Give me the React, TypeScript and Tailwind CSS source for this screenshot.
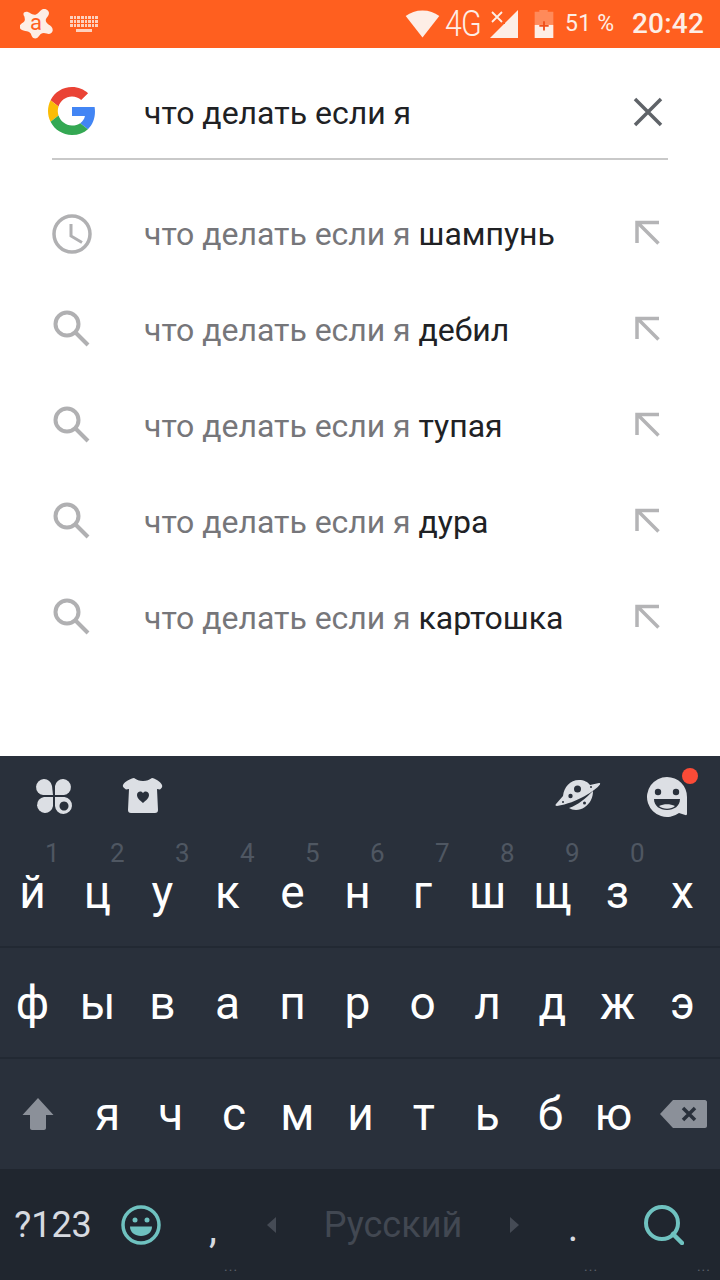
const rows = [
  { bold: "шампунь", clock: true },
  { bold: "дебил" },
  { bold: "тупая" },
  { bold: "дура" },
  { bold: "картошка" },
];
const r1 = ["й", "ц", "у", "к", "е", "н", "г", "ш", "щ", "з", "х"];
const d1 = ["1", "2", "3", "4", "5", "6", "7", "8", "9", "0", ""];
const r2 = ["ф", "ы", "в", "а", "п", "р", "о", "л", "д", "ж", "э"];
const r3 = ["я", "ч", "с", "м", "и", "т", "ь", "б", "ю"];

function GoogleG() {
  return (
    <svg width="48" height="48" viewBox="0 0 48 48">
      <path fill="#EA4335" d="M24 9.5c3.54 0 6.71 1.22 9.21 3.6l6.85-6.85C35.9 2.38 30.47 0 24 0 14.62 0 6.51 5.38 2.56 13.22l7.98 6.19C12.43 13.72 17.74 9.5 24 9.5z" />
      <path fill="#4285F4" d="M46.98 24.55c0-1.57-.15-3.09-.38-4.55H24v9.02h12.94c-.58 2.96-2.26 5.48-4.78 7.18l7.73 6c4.51-4.18 7.09-10.36 7.09-17.65z" />
      <path fill="#FBBC05" d="M10.53 28.59c-.48-1.45-.76-2.99-.76-4.59s.27-3.14.76-4.59l-7.98-6.19C.92 16.46 0 20.12 0 24c0 3.88.92 7.54 2.56 10.78l7.97-6.19z" />
      <path fill="#34A853" d="M24 48c6.48 0 11.93-2.13 15.89-5.81l-7.73-6c-2.15 1.45-4.92 2.3-8.16 2.3-6.26 0-11.57-4.22-13.47-9.91l-7.98 6.19C6.51 42.62 14.62 48 24 48z" />
    </svg>
  );
}

function Avast() {
  return (
    <div className="relative w-[34px] h-[34px]">
      <svg width="34" height="34" viewBox="0 0 34 34">
        <path fill="#fdeee6" d="M4 5.5c2-1.500 4.500-.5 6 .5 2 1.500 4 2 6 1.500 2.500-1 3.500-3.500 6-5 3-1.500 7 .5 7 3.500 0 2.500-2 4-3 6-.8 2.200.5 4 2.500 5.500 2.500 1.500 4.500 3 4.200 6-.4 3-3.500 4-6 3-2.500-.8-4-.8-6 .5-2 1.600-2.500 4.500-5.500 4.500-3 0-3.500-3-4.500-5-1-1.800-3-2.200-5.500-2.500-3-.5-5.700-1.500-5.500-4.500.2-2.500 3-3.500 4.500-5 1.200-1.500.5-3.500 0-5.500C3.500 8.500 3 6.500 4 5.500z" />
      </svg>
      <span className="absolute left-[10px] top-[2px] text-[22px] leading-[28px] font-normal text-[#ff5f1f] font-['Roboto',sans-serif]">a</span>
    </div>
  );
}

function KeyboardIcon() {
  const cells = Array.from({ length: 24 });
  return (
    <div className="flex flex-col items-center gap-[2px] w-[28px] opacity-80">
      <div className="grid grid-cols-8 gap-[1px] w-[28px]">
        {cells.map((_, i) => (
          <div key={i} className="h-[3px] bg-[#fdeee6]" />
        ))}
      </div>
      <div className="w-[16px] h-[3px] bg-[#fdeee6]" />
    </div>
  );
}

function StatusBar() {
  return (
    <div className="h-[48px] bg-[#ff5f1f] flex items-center font-['Roboto',sans-serif] text-[#fdeee6]">
      <div className="ml-[20px]"><Avast /></div>
      <div className="ml-[16px]"><KeyboardIcon /></div>
      <svg className="ml-[307px]" width="35" height="28" viewBox="0 0 36 30">
        <path fill="#fdeee6" d="M0 6.500C5 2.500 11 .5 18 .5s13 2 18 6L18 29.500z" />
      </svg>
      <span className="ml-[5px] w-[45px] text-[37px] leading-[48px] font-light tracking-[-1px] scale-x-[0.82] origin-left whitespace-nowrap">4G</span>
      <svg className="w-[30px] h-[30px]" viewBox="0 0 30 30">
        <path fill="#fdeee6" d="M28 1V29H0L28 1z" />
        <path fill="#ff5f1f" d="M0 0h15v15H0z" />
        <path stroke="#fdeee6" strokeWidth="1.800" d="M2 3l10 10M12 3 2 13" />
      </svg>
      <svg className="ml-[14px]" width="20" height="28" viewBox="0 0 20 30">
        <path fill="#ff8a5a" d="M5 2V0h9v2h6v14H0V2z" />
        <path fill="#fdeee6" d="M0 16h20v14H0z" />
        <path fill="none" stroke="#f0501a" strokeWidth="2" d="M10 12v10M5 17h10" />
      </svg>
      <span className="ml-[11px] w-[50px] text-[23px] leading-[48px] tracking-[0.2px] whitespace-nowrap">51 %</span>
      <span className="ml-[17px] text-[28px] leading-[48px] font-medium tracking-[0.2px]">20:42</span>
    </div>
  );
}

function SearchHeader() {
  return (
    <div className="mx-[52px] h-[112px] border-b-2 border-[#c9c9c9] flex items-center relative">
      <div className="-ml-[4px] mt-[16px]"><GoogleG /></div>
      <span className="ml-[48px] mt-[20px] text-[32px] leading-[40px] text-[#202124]">что делать если я</span>
      <svg className="ml-auto mr-[4px] mt-[18px]" width="32" height="32" viewBox="0 0 32 32">
        <path stroke="#5f6368" strokeWidth="3.500" d="M3 3l26 26M29 3 3 29" />
      </svg>
    </div>
  );
}

function Row({ bold, clock }: { bold: string; clock?: boolean }) {
  return (
    <div className="h-[96px] flex items-center pl-[52px] pr-[52px]">
      <div className="w-[40px] h-[40px] flex items-center justify-center">
        {clock ? (
          <svg width="40" height="40" viewBox="0 0 40 40" fill="none" stroke="#b0b0b2" strokeWidth="3.500">
            <circle cx="20" cy="20" r="18" />
            <path d="M19 10v12l11 6.500" strokeWidth="3" />
          </svg>
        ) : (
          <svg width="40" height="40" viewBox="0 0 40 40" fill="none" stroke="#b0b0b2" strokeWidth="4">
            <circle cx="15" cy="14" r="11.500" />
            <path d="M24 23 36 35" />
          </svg>
        )}
      </div>
      <span className="ml-[52px] text-[32px] leading-[40px] tracking-[-0.03px] text-[#76767a]">
        что делать если я <span className="text-[#202124]">{bold}</span>
      </span>
      <svg className="ml-auto mr-[6px] mb-[3px]" width="28" height="28" viewBox="0 0 28 28" fill="none" stroke="#b4b4b6" strokeWidth="3.500">
        <path d="M3 24V3.500H25M3.500 3.500 24.500 24.500" />
      </svg>
    </div>
  );
}

function Clover() {
  return (
    <svg width="38" height="38" viewBox="0 0 38 38" fill="#dcdfe4">
      <path d="M18 18H8a8 8 0 1 1 9-9z" />
      <path d="M20 18V9a8 8 0 1 1 9 9z" />
      <path d="M18 20v9a8 8 0 1 1-9-9z" />
      <path fillRule="evenodd" d="M20 20h9.500a8.500 8.500 0 1 1-9.500 9zM29 24.500a4.500 4.500 0 1 0 .01 0z" />
    </svg>
  );
}

function Shirt() {
  return (
    <svg width="42" height="38" viewBox="0 0 42 38">
      <path fill="#dcdfe4" d="M12 1c3 2 5 3 9 3s6-1 9-3c3 .5 8 3 10 7 .8 2-.5 3-2 4.500L35 12l1 21c0 2-1 3-3 3H9c-2 0-3-1-3-3l1-21-3 .5C2.500 11 .2 10 1 8c2-4 8-6.500 11-7z" />
      <path fill="#29303b" d="M21 26c-3-2.500-6-5-6-8 0-2 1.500-3.500 3.300-3.500 1.200 0 2.200.6 2.700 1.600.5-1 1.500-1.600 2.700-1.600 1.800 0 3.300 1.500 3.300 3.500 0 3-3 5.500-6 8z" />
    </svg>
  );
}

function Planet() {
  return (
    <svg width="46" height="34" viewBox="0 0 46 34" fill="#dcdfe4">
      <path d="M8 17C9 8 15 1 24 1c5 0 9 2 11 5l9-2c1 0 1.500 .5 1 1.500C41 11 22 24 2 27c-1.500 0-2-1-1-2z" />
      <path d="M38 12c0 3-.5 6-2 9-3 6-9 10-15 10-3 0-5-1-7-2 9-3 17-10 24-17z" />
      <circle cx="22.500" cy="10" r="3.500" fill="#29303b" />
      <circle cx="15.500" cy="17" r="2.200" fill="#29303b" />
      <circle cx="29.500" cy="24" r="1.500" fill="#29303b" />
      <circle cx="8" cy="23" r="1" fill="#29303b" />
      <circle cx="36" cy="8" r="1" fill="#29303b" />
    </svg>
  );
}

function Smiley() {
  return (
    <div className="relative w-[56px] h-[50px] mb-[6px]">
      <svg className="absolute left-0 top-[8px]" width="42" height="42" viewBox="0 0 42 42">
        <path fill="#dcdfe4" d="M21 1a20 20 0 0 1 20 20v17c0 .8-.5 1-1 1.200L33 37a20 20 0 1 1-12-36z" />
        <circle cx="12" cy="16" r="3.200" fill="#29303b" />
        <circle cx="30" cy="16" r="3.200" fill="#29303b" />
        <path fill="#29303b" d="M8 23h26c0 7-6 11-13 11S8 30 8 23z" />
        <path fill="#dcdfe4" d="M13 30c5-2.500 11-2.500 16 0-2 2-5 2.700-8 2.700s-6-.7-8-2.700z" />
      </svg>
      <div className="absolute left-[36px] top-0 w-[16px] h-[16px] rounded-full bg-[#fb4b37]" />
    </div>
  );
}

function Dots() {
  return <span className="absolute left-[48px] bottom-[7px] text-[14px] leading-[14px] tracking-[1px] text-[#5c616a]">...</span>;
}

function Keyboard() {
  return (
    <div className="font-['Roboto',sans-serif] bg-[#29303b]">
      <div className="h-[80px] flex items-center pl-[35px] pr-[18px]">
        <Clover />
        <div className="ml-[49px]"><Shirt /></div>
        <div className="ml-auto mr-[45px]"><Planet /></div>
        <Smiley />
      </div>
      <div className="h-[112px] border-b-2 border-[#222933] grid grid-cols-[repeat(11,65px)]">
        {r1.map((k, i) => (
          <div key={k} className="relative flex justify-center">
            <span className="absolute left-[45px] top-0 text-[26px] leading-[34px] text-[#4f5762]">{d1[i]}</span>
            <span className="mt-[30px] text-[46px] leading-[52px] text-white">{k}</span>
          </div>
        ))}
      </div>
      <div className="h-[111px] border-b-2 border-[#222933] grid grid-cols-[repeat(11,65px)] items-center">
        {r2.map((k) => (
          <span key={k} className="text-center text-[46px] leading-[52px] text-white">{k}</span>
        ))}
      </div>
      <div className="h-[110px] flex items-center">
        <div className="w-[76px] flex justify-center">
          <svg width="32" height="34" viewBox="0 0 32 34">
            <path fill="#8b9099" d="M16 1 31.500 18H24v13c0 1-1 2-2 2H10c-1 0-2-1-2-2V18H.5z" />
          </svg>
        </div>
        {r3.map((k) => (
          <span key={k} className="w-[63.250px] text-center text-[46px] leading-[52px] text-white">{k}</span>
        ))}
        <div className="ml-[14px]">
          <svg width="48" height="30" viewBox="0 0 48 30">
            <path fill="#8b9099" d="M14 1h32c1 0 2 1 2 2v24c0 1-1 2-2 2H14L1 15z" />
            <path stroke="#29303b" strokeWidth="3.500" d="M24 9l12 12M36 9 24 21" />
          </svg>
        </div>
      </div>
      <div className="h-[111px] bg-[#20262f] flex items-center">
        <span className="w-[106px] text-center text-[36px] leading-[44px] text-[#d7dae0]">?123</span>
        <div className="w-[70px] flex justify-center">
          <svg width="40" height="40" viewBox="0 0 40 40">
            <circle cx="20" cy="20" r="18" fill="none" stroke="#6fc2c0" strokeWidth="3.500" />
            <circle cx="14" cy="15" r="2.500" fill="#6fc2c0" />
            <circle cx="26" cy="15" r="2.500" fill="#6fc2c0" />
            <path fill="#6fc2c0" d="M9 21.500h22c0 6-5 9.500-11 9.500S9 27.500 9 21.500z" />
          </svg>
        </div>
        <div className="relative w-[74px] h-full flex items-center justify-center">
          <span className="text-[40px] leading-[52px] text-[#d7dae0] mt-[8px]">,</span>
          <Dots />
        </div>
        <div className="w-[286px] flex items-center justify-center">
          <svg width="10" height="18" viewBox="0 0 10 18"><path fill="#454b55" d="M9 1v16L0 9z" /></svg>
          <span className="w-[232px] text-center text-[36px] leading-[44px] text-[#424852]">Русский</span>
          <svg width="10" height="18" viewBox="0 0 10 18"><path fill="#454b55" d="M1 1v16L10 9z" /></svg>
        </div>
        <div className="relative w-[74px] h-full flex items-center justify-center">
          <span className="text-[40px] leading-[52px] text-[#d7dae0] mt-[6px]">.</span>
          <Dots />
        </div>
        <div className="relative w-[110px] h-full flex items-center">
          <svg className="ml-[34px]" width="40" height="40" viewBox="0 0 40 40" fill="none" stroke="#6fc2c0" strokeWidth="4" strokeLinecap="round">
            <circle cx="18" cy="18" r="16" />
            <path d="M29 29 38 38" strokeWidth="4.500" />
          </svg>
          <span className="absolute right-[9px] bottom-[7px] text-[14px] leading-[14px] tracking-[1px] text-[#5c616a]">...</span>
        </div>
      </div>
    </div>
  );
}

export default function App() {
  return (
    <div className="w-[720px] h-[1280px] bg-white flex flex-col overflow-hidden font-['Roboto',sans-serif]">
      <StatusBar />
      <SearchHeader />
      <div className="mt-[26px] flex-1">
        {rows.map((r) => (
          <Row key={r.bold} bold={r.bold} clock={r.clock} />
        ))}
      </div>
      <Keyboard />
    </div>
  );
}
